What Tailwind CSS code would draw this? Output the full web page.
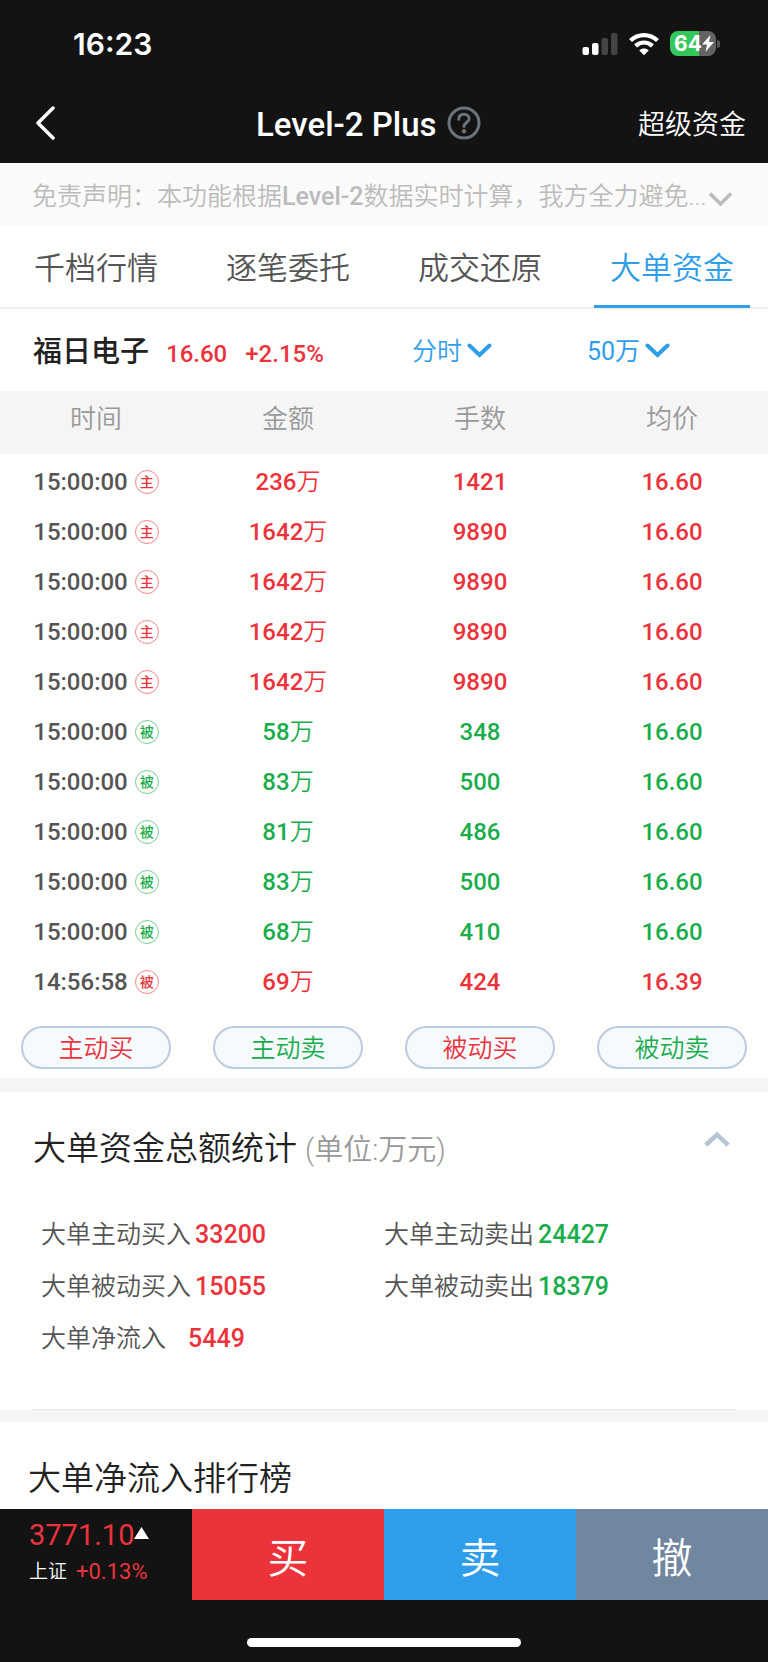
<!DOCTYPE html>
<html lang="zh-CN">
<head>
<meta charset="utf-8">
<meta name="viewport" content="width=device-width, initial-scale=1">
<title>Level-2 Plus</title>
<script src="https://cdn.jsdelivr.net/npm/@tailwindcss/browser@4"></script>
</head>
<body class="flex min-h-screen flex-col bg-white font-['Roboto','Noto_Sans_CJK_SC',sans-serif] text-[25px] leading-8 font-[350] text-[#222]">

<header class="bg-[#131313] text-white">
  <!-- Status bar -->
  <div class="flex h-[87px] items-center justify-between pr-12 pl-[73px]">
    <span class="font-['Inter',sans-serif] text-[30px] leading-none font-semibold">16:23</span>
    <div class="flex items-center gap-[11px]">
      <svg class="h-6 w-9" viewBox="0 0 36 24" aria-hidden="true">
        <rect x="0.500" y="15" width="6.500" height="8" rx="2" fill="#fff"/>
        <rect x="10" y="11" width="6.500" height="12" rx="2" fill="#fff"/>
        <rect x="19.500" y="6" width="6.500" height="17" rx="2" fill="#444"/>
        <rect x="29" y="1" width="6.500" height="22" rx="2" fill="#444"/>
      </svg>
      <svg class="h-6 w-[30px]" viewBox="0 0 30 24" aria-hidden="true" fill="none" stroke="#fff" stroke-width="4.200">
        <path d="M1.500 8.600C9 1.200 21 1.200 28.500 8.600"/>
        <path d="M6.600 14C11.300 9.300 18.700 9.300 23.400 14"/>
        <path d="M15 23.200L10.300 18.400C13 15.900 17 15.900 19.700 18.400Z" fill="#fff" stroke="none"/>
      </svg>
      <div class="flex items-center gap-px">
        <div class="flex h-[25px] w-[46px] items-center rounded-lg bg-linear-to-r from-[#34c759] from-64% to-[#636366] to-64% pl-1 font-['Inter',sans-serif] text-[21px] leading-none font-bold">
          <span>64</span>
          <svg class="h-[17px] w-3" viewBox="0 0 12 17" aria-hidden="true"><path d="M8.500 0L0 9.600H5L3.500 17L12 7H7Z" fill="#fff"/></svg>
        </div>
        <span class="h-2 w-[3px] rounded-r-full bg-[#555]"></span>
      </div>
    </div>
  </div>
  <!-- Navigation -->
  <nav class="grid h-[76px] grid-cols-[220px_1fr_auto] items-center pr-[22px] pb-1 pl-9">
    <button type="button" aria-label="返回" class="justify-self-start">
      <svg class="h-[34px] w-5" viewBox="0 0 20 34" fill="none" stroke="#fff" stroke-width="3.500" stroke-linecap="round" stroke-linejoin="round"><path d="M17 2L2 17L17 32"/></svg>
    </button>
    <div class="flex items-center gap-[10px]">
      <h1 class="pt-1 text-[33px] leading-10 font-medium">Level-2 Plus</h1>
      <button type="button" aria-label="帮助">
        <svg class="size-[34px]" viewBox="0 0 34 34" fill="none" stroke="#6b727b" stroke-width="3"><circle cx="17" cy="17" r="15"/><path d="M11.800 13.200C11.800 10 14 8.300 17 8.300S22.200 10.200 22.200 12.800C22.200 16.300 17 16.400 17 20.600" stroke-linecap="round"/><circle cx="17" cy="25.300" r="2.200" fill="#6b727b" stroke="none"/></svg>
      </button>
    </div>
    <a href="#" class="pt-1 text-[27px]">超级资金</a>
  </nav>
</header>

<main class="flex-1">
  <button type="button" class="flex h-[63px] w-full items-center bg-[#fafafa] pt-1 pr-9 pl-8 text-[#bbb]">
    <span class="whitespace-nowrap">免责声明：本功能根据<span class="font-medium">Level-2</span>数据实时计算，我方全力避免...</span>
    <svg class="mt-1 ml-auto h-[14px] w-[23px] shrink-0" viewBox="0 0 23 14" fill="none" stroke="#bbb" stroke-width="3.500"><path d="M1 1.500L11.500 12L22 1.500"/></svg>
  </button>

  <nav class="grid h-[83px] grid-cols-4 border-b-2 border-[#eee] text-[31px] text-[#555]">
    <a href="#" class="flex items-center justify-center pt-1">千档行情</a>
    <a href="#" class="flex items-center justify-center pt-1">逐笔委托</a>
    <a href="#" class="flex items-center justify-center pt-1">成交还原</a>
    <a href="#" aria-current="page" class="mx-[18px] -mb-px flex items-center justify-center border-b-3 border-[#2f9eea] pt-[6px] text-[#2f9eea]">大单资金</a>
  </nav>

  <section class="grid h-[82px] grid-cols-[412px_175px_1fr] items-center pt-1">
    <div class="flex items-baseline pl-[33px] text-2xl font-medium text-[#ec333c]">
      <h2 class="mr-[17px] text-[29px] text-[#222]">福日电子</h2>
      <span class="mr-[18px]">16.60</span>
      <span>+2.15%</span>
    </div>
    <label class="flex items-center gap-1 text-[#2f9eea]">
      <select aria-label="周期" class="h-9 appearance-none bg-transparent font-[350]"><option>分时</option></select>
      <svg class="mb-1 h-[15px] w-[25px]" viewBox="0 0 25 15" fill="none" stroke="currentColor" stroke-width="4" stroke-linecap="round"><path d="M2.500 2.500L12.500 12L22.500 2.500"/></svg>
    </label>
    <label class="flex items-center gap-1 text-[#2f9eea]">
      <select aria-label="金额" class="h-9 appearance-none bg-transparent font-normal"><option>50万</option></select>
      <svg class="mb-1 h-[15px] w-[25px]" viewBox="0 0 25 15" fill="none" stroke="currentColor" stroke-width="4" stroke-linecap="round"><path d="M2.500 2.500L12.500 12L22.500 2.500"/></svg>
    </label>
  </section>

  <table class="w-full table-fixed text-center text-2xl font-medium">
    <thead class="bg-[#f5f5f5] text-[26px] text-[#999]">
      <tr class="h-[63px]">
        <th class="pb-[6px] font-[350]">时间</th><th class="pb-[6px] font-[350]">金额</th><th class="pb-[6px] font-[350]">手数</th><th class="pb-[6px] font-[350]">均价</th>
      </tr>
    </thead>
    <tbody id="trades"></tbody>
  </table>

  <div class="grid grid-cols-4 pt-[22px] pb-[9px]">
    <button type="button" class="mx-[21px] flex h-[43px] items-center justify-center rounded-full border-2 border-[#bccbdd] bg-[#f5faff] pt-[3px] text-[#ec333c]">主动买</button>
    <button type="button" class="mx-[21px] flex h-[43px] items-center justify-center rounded-full border-2 border-[#bccbdd] bg-[#f5faff] pt-[3px] text-[#1aad4c]">主动卖</button>
    <button type="button" class="mx-[21px] flex h-[43px] items-center justify-center rounded-full border-2 border-[#bccbdd] bg-[#f5faff] pt-[3px] text-[#ec333c]">被动买</button>
    <button type="button" class="mx-[21px] flex h-[43px] items-center justify-center rounded-full border-2 border-[#bccbdd] bg-[#f5faff] pt-[3px] text-[#1aad4c]">被动卖</button>
  </div>

  <section class="border-t-14 border-[#f5f5f5] px-8">
    <div class="flex h-[110px] items-center justify-between pt-1 pr-[6px] pl-px">
      <h2 class="flex items-baseline gap-2 text-[33px] leading-10">大单资金总额统计 <small class="text-[29px] text-[#999]">(单位:万元)</small></h2>
      <button type="button" aria-label="收起" class="mb-5"><svg class="h-4 w-[26px]" viewBox="0 0 26 16" fill="none" stroke="#b6c5d4" stroke-width="4.500" stroke-linecap="square"><path d="M3.500 12.500L13 3.500L22.500 12.500"/></svg></button>
    </div>
    <dl class="grid grid-cols-[343px_1fr] border-b border-[#e5e5e5] pt-[7px] pb-11 pl-[9px] text-[#555]">
      <div class="flex h-[52px] items-center gap-1"><dt>大单主动买入</dt><dd class="font-medium text-[#ec333c]">33200</dd></div>
      <div class="flex h-[52px] items-center gap-1"><dt>大单主动卖出</dt><dd class="font-medium text-[#1aad4c]">24427</dd></div>
      <div class="flex h-[52px] items-center gap-1"><dt>大单被动买入</dt><dd class="font-medium text-[#ec333c]">15055</dd></div>
      <div class="flex h-[52px] items-center gap-1"><dt>大单被动卖出</dt><dd class="font-medium text-[#1aad4c]">18379</dd></div>
      <div class="flex h-[52px] items-center gap-[22px]"><dt>大单净流入</dt><dd class="font-medium text-[#ec333c]">5449</dd></div>
    </dl>
  </section>

  <section class="border-t-12 border-[#f5f5f5] px-7 pt-[37px] pb-[10px]">
    <h2 class="text-[33px] leading-10">大单净流入排行榜</h2>
  </section>
</main>

<footer class="bg-[#131313] text-white">
  <div class="grid h-[91px] grid-cols-4 text-[41px]">
    <a href="#" class="flex flex-col gap-[5px] pt-[10px] pl-[29px] text-[22px] leading-8 font-normal text-[#ec333c]">
      <span class="flex items-center text-[29px]">3771.10<svg class="mb-1 h-3 w-[15px]" viewBox="0 0 15 12" aria-hidden="true"><path d="M7.500 0L15 12H0Z" fill="#fff"/></svg></span>
      <span class="flex items-center gap-[9px]"><span class="text-[19px] font-[350] text-white">上证</span>+0.13%</span>
    </a>
    <button type="button" class="bg-[#ec333c] pt-2">买</button>
    <button type="button" class="bg-[#2f9eea] pt-2">卖</button>
    <button type="button" class="bg-[#70879f] pt-2">撤</button>
  </div>
  <div class="flex justify-center pt-[38px] pb-[15px]"><span class="h-[9px] w-[274px] rounded-full bg-white"></span></div>
</footer>

<script>
  const red = { text: 'text-[#ec333c]', ring: 'border-[#ec333c]/60' };
  const green = { text: 'text-[#1aad4c]', ring: 'border-[#1aad4c]/60' };
  const trades = [
    ['15:00:00', '主', 236, 1421, '16.60', red],
    ['15:00:00', '主', 1642, 9890, '16.60', red],
    ['15:00:00', '主', 1642, 9890, '16.60', red],
    ['15:00:00', '主', 1642, 9890, '16.60', red],
    ['15:00:00', '主', 1642, 9890, '16.60', red],
    ['15:00:00', '被', 58, 348, '16.60', green],
    ['15:00:00', '被', 83, 500, '16.60', green],
    ['15:00:00', '被', 81, 486, '16.60', green],
    ['15:00:00', '被', 83, 500, '16.60', green],
    ['15:00:00', '被', 68, 410, '16.60', green],
    ['14:56:58', '被', 69, 424, '16.39', red],
  ];
  document.getElementById('trades').innerHTML = trades.map(([time, kind, amount, lots, price, tone]) => `
    <tr class="h-[50px] ${tone.text}">
      <td class="pt-[6px]"><div class="flex items-center justify-center gap-[7px]"><span class="text-[#555]">${time}</span><span class="flex size-6 items-center justify-center rounded-full border ${tone.ring} text-sm leading-none font-medium">${kind}</span></div></td>
      <td class="pt-[6px]">${amount}<span class="font-[350]">万</span></td>
      <td class="pt-[6px]">${lots}</td>
      <td class="pt-[6px]">${price}</td>
    </tr>`).join('');
</script>
</body>
</html>
